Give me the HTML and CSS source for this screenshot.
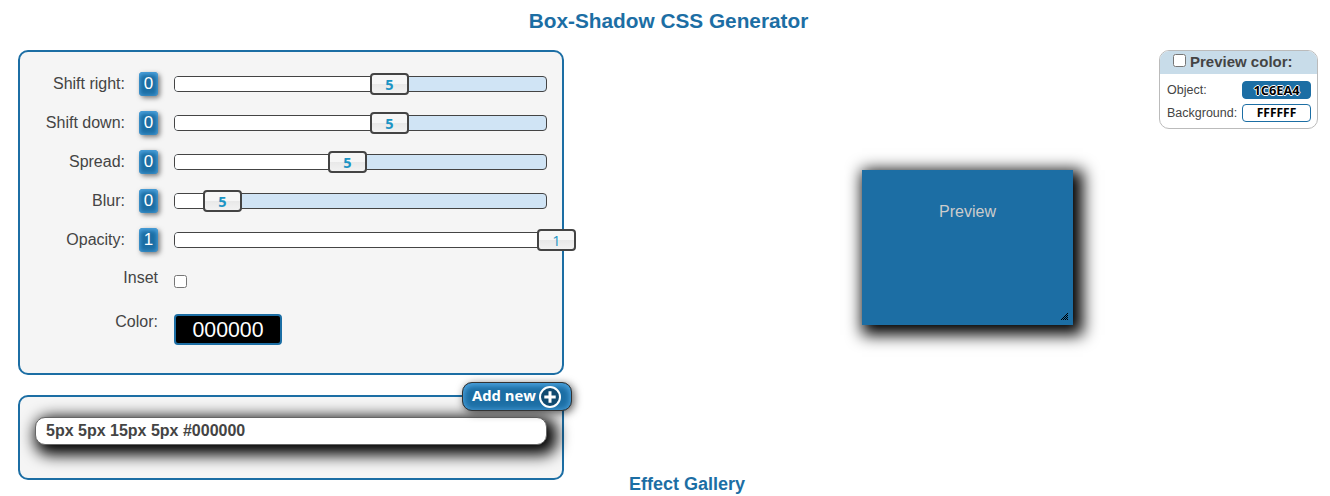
FILE: index.html
```html
<!DOCTYPE html>
<html lang="en">
<head>
<meta charset="utf-8">
<title>Box-Shadow CSS Generator</title>
<link rel="stylesheet" href="styles.css">
</head>
<body>
<h1 class="title">Box-Shadow CSS Generator</h1>
<main class="layout">
  <div class="controls">
    <section class="panel settings">
      <div class="row"><span class="label">Shift right:</span><span class="reset">0</span><div class="track"><span class="fill" style="width:214px"></span><span class="handle" style="left:195px">5</span></div></div>
      <div class="row"><span class="label">Shift down:</span><span class="reset">0</span><div class="track"><span class="fill" style="width:214px"></span><span class="handle" style="left:195px">5</span></div></div>
      <div class="row"><span class="label">Spread:</span><span class="reset">0</span><div class="track"><span class="fill" style="width:172px"></span><span class="handle" style="left:153px">5</span></div></div>
      <div class="row"><span class="label">Blur:</span><span class="reset">0</span><div class="track"><span class="fill" style="width:47px"></span><span class="handle" style="left:28px">5</span></div></div>
      <div class="row"><span class="label">Opacity:</span><span class="reset">1</span><div class="track"><span class="fill" style="width:371px"></span><span class="handle light" style="left:362px">1</span></div></div>
      <div class="row"><span class="label wide">Inset</span><input class="check" type="checkbox"></div>
      <div class="row color-row"><span class="label wide">Color:</span><span class="color">000000</span></div>
    </section>
    <section class="panel output">
      <div class="code">5px 5px 15px 5px #000000</div>
      <div class="add"><span class="add-text">Add new</span><svg width="24" height="24" viewBox="0 0 24 24"><circle cx="12" cy="12" r="10" fill="#114a70" stroke="#fff" stroke-width="2"/><path d="M12 6.3v11.4M6.3 12h11.4" stroke="#fff" stroke-width="3"/></svg></div>
    </section>
  </div>
  <div class="stage">
    <div class="preview">Preview<svg class="grip" width="8" height="8" viewBox="0 0 8 8" shape-rendering="crispEdges"><path d="M7 0h1v1h-1zM6 1h1v1h-1zM5 2h1v1h-1zM7 2h1v1h-1zM4 3h1v1h-1zM6 3h1v1h-1zM3 4h1v1h-1zM5 4h1v1h-1zM7 4h1v1h-1zM2 5h1v1h-1zM4 5h1v1h-1zM6 5h1v1h-1zM1 6h1v1h-1zM3 6h1v1h-1zM5 6h1v1h-1zM7 6h1v1h-1z"/></svg></div>
    <h2 class="gallery">Effect Gallery</h2>
  </div>
  <aside class="palette">
    <div class="palette-head"><input class="check" type="checkbox"><span>Preview color:</span></div>
    <div class="swatch-row"><span>Object:</span><span class="swatch object">1C6EA4</span></div>
    <div class="swatch-row"><span>Background:</span><span class="swatch">FFFFFF</span></div>
  </aside>
</main>
</body>
</html>
```
FILE: styles.css
```css
* { box-sizing: border-box; }
body { margin: 0; height: 496px; overflow: hidden; background: #fff; color: #444; font: 16px/20px "Liberation Sans", Arial, sans-serif; }
.title { margin: 0; height: 50px; padding: 9px 0 0 7px; text-align: center; font-size: 20.8px; line-height: 24px; color: #1c6ea4; }
.layout { display: grid; grid-template-columns: 546px 1fr 159px; padding: 0 12px 0 18px; height: 446px; align-items: start; }
.panel { border: 2px solid #1c6ea4; border-radius: 10px; background: #f5f5f5; }
.settings { height: 325px; padding-top: 12px; }
.row { display: flex; height: 39px; align-items: center; padding: 0 15px 0 5px; }
.label { width: 100px; text-align: right; padding-top: 1px; }
.label.wide { width: 133px; margin-right: 16px; padding: 0 0 1px; }
.reset { width: 19px; height: 24px; margin: 0 16px 0 14px; border-radius: 4px; text-align: center; font-size: 17px; line-height: 24px; color: #fff; background: #1c6ea4; box-shadow: inset 0 0 5px #4ba1dc, inset 0 3px 5px -1px #4ba1dc, 2px 2px 5px rgba(0,0,0,.5); }
.track { position: relative; width: 373px; height: 16px; border: 1px solid #444; border-radius: 4px; background: #d0e4f5; }
.fill { display: block; height: 14px; background: #fff; border-radius: 3px 0 0 3px; }
.handle { position: absolute; top: -4px; width: 39px; height: 22px; border: 2px solid #444; border-radius: 4px; background: linear-gradient(#f6f6f6 0 50%, #e8e8e8 50%, #f2f2f2); color: #1c94c4; font: bold 14.5px/19px "Open Sans", sans-serif; text-align: center; }
.handle.light { font-weight: 400; }
.check { width: 13px; height: 13px; margin: 5px 0 0; }
.color-row { height: 47px; }
.color-row .label { padding-bottom: 0; }
.color { width: 108px; height: 31px; margin-top: 16px; border: 2px solid #1c6ea4; border-radius: 4px; background: #000; color: #fff; font-size: 21.3px; line-height: 28px; text-align: center; }
.output { position: relative; height: 85px; margin-top: 20px; padding: 20px 15px; }
.code { height: 28px; padding-left: 10px; border: 1px solid #666; border-radius: 10px; background: #fff; font-weight: bold; line-height: 25px; box-shadow: 5px 5px 15px 5px #000; }
.add { position: absolute; top: -15px; right: -10px; display: flex; align-items: center; width: 110px; height: 29px; padding-left: 9px; gap: 2px; border: 1px solid #333; border-radius: 10px; color: #fff; font: bold 14.8px/24px "Open Sans", sans-serif; white-space: nowrap; background: #1c6ea4; box-shadow: inset 0 0 7px #4ba1dc, inset 0 3px 6px -1px #4ba1dc, 2px 2px 8px rgba(0,0,0,.65); }
.add-text { padding-bottom: 3px; }
.stage { display: flex; flex-direction: column; height: 446px; }
.preview { position: relative; width: 211px; height: 155px; margin: 120px 0 0 298px; padding-top: 32px; text-align: center; color: #ccc; background: #1c6ea4; box-shadow: 5px 5px 15px 5px #000; }
.grip { position: absolute; right: 5px; bottom: 4px; }
.gallery { margin: 149px 0 0 65px; font-size: 18px; line-height: 20px; color: #1c6ea4; }
.palette { height: 79px; border: 1px solid #bbb; border-radius: 10px; overflow: hidden; background: #fff; }
.palette-head { display: flex; align-items: flex-start; height: 23px; padding-left: 13px; gap: 4px; background: #c8dce9; font-size: 15px; font-weight: bold; line-height: 22px; }
.palette-head .check { margin: 3px 0 0; }
.swatch-row { display: flex; justify-content: space-between; align-items: center; height: 23px; padding: 0 6px 0 7px; font-size: 12.5px; }
.palette-head + .swatch-row { margin-top: 4px; }
.swatch { width: 69px; height: 18px; border: 1px solid #1c6ea4; border-radius: 4px; font: bold 12px/16px "Open Sans", sans-serif; color: #000; text-align: center; }
.object { background: #1c6ea4; font-size: 12.8px; text-shadow: 1px 0 #fff, -1px 0 #fff, 0 1px #fff, 0 -1px #fff; }
```
